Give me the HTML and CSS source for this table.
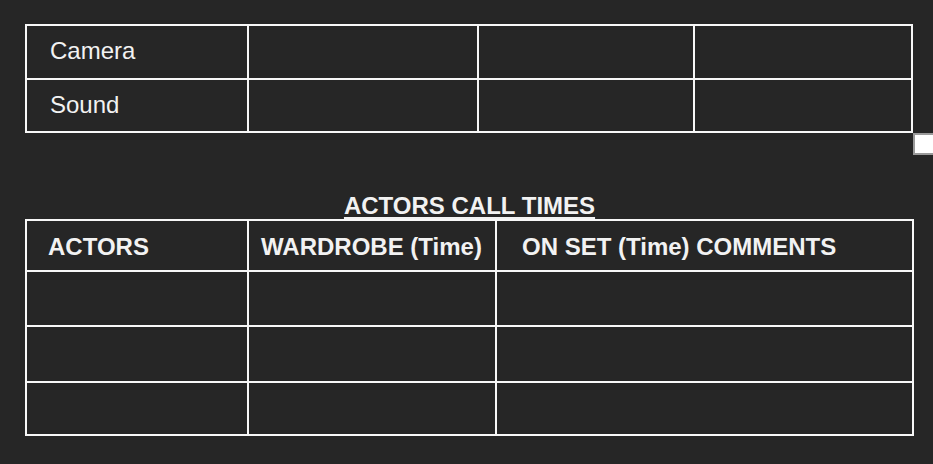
FILE: index.html
```html
<!DOCTYPE html>
<html lang="en">
<head>
<meta charset="utf-8">
<title>Call Sheet</title>
<link rel="stylesheet" href="styles.css">
</head>
<body>
<div class="page">
  <div class="crew-grid">
    <div class="cell label">Camera</div>
    <div class="cell"></div>
    <div class="cell"></div>
    <div class="cell"></div>
    <div class="cell label">Sound</div>
    <div class="cell"></div>
    <div class="cell"></div>
    <div class="cell"></div>
  </div>
  <div class="handle"></div>

  <div class="section-title"><span>ACTORS CALL TIMES</span></div>

  <div class="actors-grid">
    <div class="cell head head-1">ACTORS</div>
    <div class="cell head head-2">WARDROBE (Time)</div>
    <div class="cell head head-3">ON SET (Time) COMMENTS</div>
    <div class="cell"></div>
    <div class="cell"></div>
    <div class="cell"></div>
    <div class="cell"></div>
    <div class="cell"></div>
    <div class="cell"></div>
    <div class="cell"></div>
    <div class="cell"></div>
    <div class="cell"></div>
  </div>
</div>
</body>
</html>
```

FILE: styles.css
```css
html, body {
  margin: 0;
  padding: 0;
  background: #262626;
}

body {
  font-family: "Liberation Sans", Arial, sans-serif;
  color: #f2f2f2;
  width: 933px;
  height: 464px;
  overflow: hidden;
}

.page {
  position: relative;
  padding-top: 24px;
  padding-left: 25px;
}

.crew-grid {
  display: grid;
  width: 888px;
  grid-template-columns: 220px 228px 214px 216px;
  grid-template-rows: 52px 51px;
  gap: 2px;
  padding: 2px;
  box-sizing: border-box;
  background: #f7f7f7;
}

.actors-grid {
  display: grid;
  width: 889px;
  grid-template-columns: 220px 246px 415px;
  grid-template-rows: 49px 53px 54px 51px;
  gap: 2px;
  padding: 2px;
  box-sizing: border-box;
  background: #f7f7f7;
}

.cell {
  background: #262626;
  display: flex;
  align-items: center;
  font-size: 24px;
  line-height: 28px;
}

.label {
  padding-left: 23px;
  padding-bottom: 2px;
}

.head {
  font-weight: bold;
  padding-top: 2px;
}

.head-1 { padding-left: 21px; }
.head-2 { padding-left: 12px; }
.head-3 { padding-left: 25px; }

.handle {
  position: absolute;
  left: 913px;
  top: 133px;
  width: 20px;
  height: 22px;
  box-sizing: border-box;
  background: #ffffff;
  border-left: 2px solid #9a9a9a;
  border-top: 2px solid #9a9a9a;
  border-bottom: 2px solid #9a9a9a;
}

.section-title {
  width: 889px;
  margin-top: 59px;
  margin-bottom: -1px;
  text-align: center;
  font-size: 24px;
  line-height: 28px;
  font-weight: bold;
}

.section-title span {
  text-decoration: underline;
  text-decoration-thickness: 2px;
  text-underline-offset: 3px;
}
```
